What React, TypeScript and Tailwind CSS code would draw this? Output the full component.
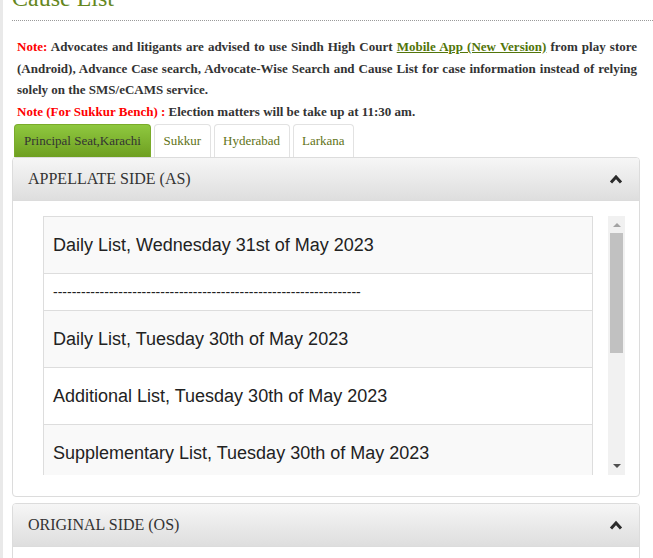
import React from "react";

const Chevron = () => (
  <svg width="14" height="10" viewBox="0 0 14 10">
    <polyline points="2,8.5 7,3 12,8.5" fill="none" stroke="#2b2b2b" strokeWidth="3" strokeLinejoin="miter" />
  </svg>
);

const tabs = [
  { label: "Principal Seat,Karachi", active: true },
  { label: "Sukkur" },
  { label: "Hyderabad" },
  { label: "Larkana" },
];

const rows: { text: string; sep?: boolean }[] = [
  { text: "Daily List, Wednesday 31st of May 2023" },
  { text: "------------------------------------------------------------------", sep: true },
  { text: "Daily List, Tuesday 30th of May 2023" },
  { text: "Additional List, Tuesday 30th of May 2023" },
  { text: "Supplementary List, Tuesday 30th of May 2023" },
];

export default function App() {
  return (
    <div className="w-[653px] h-[558px] overflow-hidden bg-white border-l-[3px] border-[#e9e9e9] font-['Liberation_Serif','Times_New_Roman',serif]">
      <div className="pl-[9px]">
        <h2 className="mt-[-15px] text-[24px] leading-[26px] text-[#65871d] pb-[9px] border-b border-dotted border-[#9a9a9a]">
          Cause List
        </h2>
        <div className="w-[630px] mt-[15px] px-[5px] text-[13px] leading-[21.5px] font-bold text-[#333] text-justify">
          <p>
            <span className="text-[#f00]">Note:</span> Advocates and litigants are advised to use Sindh High Court{" "}
            <a className="text-[#52750a] underline">Mobile App (New Version)</a> from play store (Android), Advance Case
            search, Advocate-Wise Search and Cause List for case information instead of relying solely on the SMS/eCAMS
            service.
          </p>
          <p>
            <span className="text-[#f00]">Note (For Sukkur Bench) :</span> Election matters will be take up at 11:30 am.
          </p>
        </div>
        <div className="mt-[2px] flex pl-[2px] gap-[3px]">
          {tabs.map((t) => (
            <div
              key={t.label}
              className={
                t.active
                  ? "h-[33px] px-[9px] flex items-center text-[13px] text-[#333] rounded-t-[4px] border border-b-0 border-[#7aab2a] bg-gradient-to-b from-[#8fc83f] to-[#6e9f20]"
                  : "h-[33px] px-[8.5px] flex items-center text-[13px] text-[#5f7317] rounded-t-[4px] border border-b-0 border-[#e2e2e2] bg-white"
              }
            >
              {t.label}
            </div>
          ))}
        </div>
        <div className="w-[628px] border border-[#dcdcdc] rounded-[4px] overflow-hidden">
          <div className="h-[43px] border-b border-[#dcdcdc] bg-gradient-to-b from-[#f6f6f6] to-[#dedede] flex items-center justify-between pl-[15px] pr-[16px]">
            <span className="text-[16px] text-[#333]">APPELLATE SIDE (AS)</span>
            <Chevron />
          </div>
          <div className="pt-[15px] pb-[21px] pl-[30px] pr-[14px] flex gap-[15px]">
            <div className="w-[550px] h-[259px] overflow-hidden font-['Liberation_Sans',Arial,sans-serif]">
              {rows.map((r, i) => (
                <div
                  key={i}
                  className={
                    (r.sep ? "h-[37px] text-[14px] " : "h-[57px] text-[18px] ") +
                    (i % 2 === 0 ? "bg-[#f9f9f9] " : "bg-white ") +
                    "border border-b-0 border-[#dddddd] flex items-center pl-[9px] text-[#222] whitespace-nowrap"
                  }
                >
                  {r.text}
                </div>
              ))}
            </div>
            <div className="w-[17px] h-[259px] bg-[#f1f1f1] flex flex-col items-center">
              <div className="h-[17px] flex items-center justify-center">
                <svg width="8" height="5" viewBox="0 0 8 5">
                  <polygon points="0,5 4,1 8,5" fill="#a3a3a3" />
                </svg>
              </div>
              <div className="w-[13px] h-[120px] bg-[#c1c1c1]" />
              <div className="flex-1" />
              <div className="h-[17px] flex items-center justify-center">
                <svg width="8" height="5" viewBox="0 0 8 5">
                  <polygon points="0,0 8,0 4,4" fill="#505050" />
                </svg>
              </div>
            </div>
          </div>
        </div>
        <div className="mt-[6px] w-[628px] border border-[#dcdcdc] rounded-[4px] overflow-hidden">
          <div className="h-[43px] border-b border-[#dcdcdc] bg-gradient-to-b from-[#f6f6f6] to-[#dedede] flex items-center justify-between pl-[15px] pr-[16px]">
            <span className="text-[16px] text-[#333]">ORIGINAL SIDE (OS)</span>
            <Chevron />
          </div>
          <div className="h-[60px] bg-white" />
        </div>
      </div>
    </div>
  );
}
